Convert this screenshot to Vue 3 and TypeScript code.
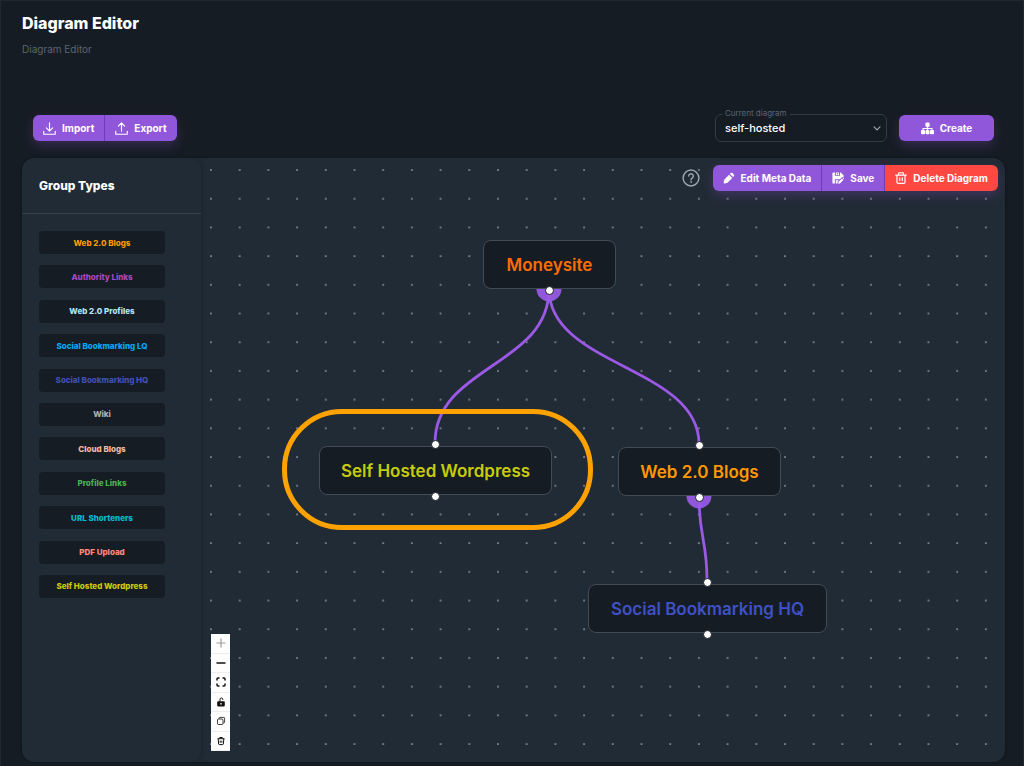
<script setup lang="ts">
import { ref } from 'vue'

interface GroupType {
  name: string
  color: string
}

interface DiagramNode {
  id: string
  label: string
  color: string
  x: number
  y: number
  width: number
  input: boolean
  expanded: boolean
}

interface Point {
  x: number
  y: number
}

const NODE_HEIGHT = 49
const GRID_SIZE = 20
const ZOOM = 1.435

const groupTypes: GroupType[] = [
  { name: 'Web 2.0 Blogs', color: '#ff9800' },
  { name: 'Authority Links', color: '#ab47bc' },
  { name: 'Web 2.0 Profiles', color: '#b3e5fc' },
  { name: 'Social Bookmarking LQ', color: '#03a9f4' },
  { name: 'Social Bookmarking HQ', color: '#3f51b5' },
  { name: 'Wiki', color: '#b0b0b0' },
  { name: 'Cloud Blogs', color: '#eebba5' },
  { name: 'Profile Links', color: '#4caf50' },
  { name: 'URL Shorteners', color: '#00bcd4' },
  { name: 'PDF Upload', color: '#ff8a80' },
  { name: 'Self Hosted Wordpress', color: '#cccc0a' },
]

const nodes: DiagramNode[] = [
  { id: 'money', label: 'Moneysite', color: '#ff6d00', x: 282, y: 82, width: 133, input: false, expanded: true },
  { id: 'wordpress', label: 'Self Hosted Wordpress', color: '#c6cc0a', x: 118, y: 288, width: 233, input: true, expanded: false },
  { id: 'blogs', label: 'Web 2.0 Blogs', color: '#ff9800', x: 417, y: 289, width: 163, input: true, expanded: true },
  { id: 'social', label: 'Social Bookmarking HQ', color: '#3f51c5', x: 387, y: 426, width: 239, input: true, expanded: false },
]

const links: [string, string][] = [
  ['money', 'wordpress'],
  ['money', 'blogs'],
  ['blogs', 'social'],
]

function find(id: string): DiagramNode {
  return nodes.find((n) => n.id === id)!
}

function centre(n: DiagramNode): number {
  return n.x + (n.width - 1) / 2
}

function outlet(n: DiagramNode): Point {
  return { x: centre(n), y: n.y + NODE_HEIGHT }
}

function inlet(n: DiagramNode): Point {
  return { x: centre(n), y: n.y - 3 }
}

function edgePath([from, to]: [string, string]): string {
  const a = outlet(find(from))
  const b = inlet(find(to))
  const mid = (a.y + b.y) / 2
  return `M${a.x},${a.y} C${a.x},${mid} ${b.x},${mid} ${b.x},${b.y}`
}

const current = ref('self-hosted')
</script>

<template>
  <main class="page">
    <header class="heading">
      <h1>Diagram Editor</h1>
      <p>Diagram Editor</p>
    </header>

    <div class="actions">
      <div class="button-group">
        <button type="button" class="btn">
          <svg class="icon" viewBox="0 0 14 14" fill="none" stroke="currentColor" stroke-width="1.2" stroke-linecap="round" stroke-linejoin="round">
            <path d="M7 .8V9.6M3.6 6.4 7 9.8l3.4-3.4M.8 10v3.2h12.400V10" />
          </svg>
          Import
        </button>
        <button type="button" class="btn">
          <svg class="icon" viewBox="0 0 14 14" fill="none" stroke="currentColor" stroke-width="1.2" stroke-linecap="round" stroke-linejoin="round">
            <path d="M7 10V1.2M3.6 4.400 7 1l3.4 3.4M.8 10v3.2h12.400V10" />
          </svg>
          Export
        </button>
      </div>
      <div class="actions-right">
        <div class="field">
          <label for="diagram">Current diagram</label>
          <select id="diagram" v-model="current">
            <option>self-hosted</option>
          </select>
          <svg class="chevron" viewBox="0 0 8 5" fill="none" stroke="currentColor" stroke-width="1.1" stroke-linecap="round" stroke-linejoin="round">
            <path d="M1 .8 4 3.8 7 .8" />
          </svg>
        </div>
        <button type="button" class="btn create">
          <svg class="icon" viewBox="0 0 14 14" fill="currentColor">
            <rect x="4.7" y=".6" width="4.6" height="4.8" rx="1.4" />
            <rect x="0" y="8.600" width="4.3" height="4.6" rx="1.1" />
            <rect x="4.850" y="8.600" width="4.3" height="4.6" rx="1.1" />
            <rect x="9.7" y="8.600" width="4.3" height="4.6" rx="1.1" />
            <path d="M7 5v4M2.200 9V7h9.600v2" fill="none" stroke="currentColor" stroke-width="1.2" />
          </svg>
          Create
        </button>
      </div>
    </div>

    <section class="editor">
      <aside class="sidebar">
        <h2>Group Types</h2>
        <ul>
          <li v-for="g in groupTypes" :key="g.name">
            <button type="button" class="group" :style="{ color: g.color }">{{ g.name }}</button>
          </li>
        </ul>
      </aside>

      <div class="canvas">
        <svg class="layer" aria-hidden="true">
          <defs>
            <pattern id="dots" x="9" y="11" :width="GRID_SIZE * ZOOM" :height="GRID_SIZE * ZOOM" patternUnits="userSpaceOnUse">
              <circle cx="1" cy="1" r="0.85" fill="#b4bbc2" />
            </pattern>
          </defs>
          <rect width="100%" height="100%" fill="url(#dots)" />
          <g v-for="n in nodes.filter((node) => node.expanded)" :key="n.id">
            <circle :cx="outlet(n).x" :cy="outlet(n).y" r="12.5" fill="#9157da" />
          </g>
          <path v-for="l in links" :key="l.join()" :d="edgePath(l)" fill="none" stroke="#9b59e6" stroke-width="2.8" />
        </svg>

        <div
          v-for="n in nodes"
          :key="n.id"
          class="node"
          :style="{ left: n.x + 'px', top: n.y + 'px', width: n.width + 'px', height: NODE_HEIGHT + 'px', color: n.color }"
        >
          {{ n.label }}
          <span v-if="n.input" class="handle top"></span>
          <span class="handle bottom"></span>
        </div>

        <div class="highlight"></div>

        <div class="toolbar">
          <button type="button" class="help" aria-label="Help">
            <svg viewBox="0 0 18 18" fill="none" stroke="currentColor" stroke-width="1.5" stroke-linecap="round">
              <circle cx="9" cy="9" r="7.9" />
              <path d="M6.7 7.1a2.3 2.3 0 1 1 3.5 2c-.8.5-1.2.8-1.2 1.7" />
              <circle cx="9" cy="13" r=".5" fill="currentColor" stroke-width=".8" />
            </svg>
          </button>
          <div class="button-group">
            <button type="button" class="btn">
              <svg class="icon" viewBox="0 0 14 14" fill="currentColor">
                <path d="M1.600 8.700 7.100 3.200l3.700 3.700-5.500 5.500-3.200.9a1 1 0 0 1-1.300-1.300zM8.100 2.200l.9-.9a1.500 1.500 0 0 1 2.100 0l1.600 1.600a1.500 1.500 0 0 1 0 2.100l-.9.9z" />
              </svg>
              Edit Meta Data
            </button>
            <button type="button" class="btn">
              <svg class="icon" viewBox="0 0 14 14">
                <path fill="currentColor" fill-rule="evenodd" d="M1.500.5h1.800v4h6v-4h.9L13.500 3.700v2.300c-1-.4-1.900 0-2.600.7L9.100 8.500H3.300v5H1.500a1 1 0 0 1-1-1v-11a1 1 0 0 1 1-1zM4.400.5h3.800v3H4.400zM5.700 1.300v1.500h1.100V1.300zM4.400 9.600h3.700l-1.600 1.600v2.300H4.400z" />
                <path fill="currentColor" d="m7.500 11.600 4-4 1.700 1.700-4 4-1.900.4zM12.200 6.900l.3-.3c.7-.5 2 .9 1.400 1.500l-.3.300z" />
              </svg>
              Save
            </button>
            <button type="button" class="btn danger">
              <svg class="icon" viewBox="0 0 14 14" fill="none" stroke="currentColor" stroke-width="1.400" stroke-linecap="round" stroke-linejoin="round">
                <path d="M.8 3.600h12.400M4.300 3.400V.9h5.400v2.500M2.300 3.800v8.200a1.200 1.200 0 0 0 1.200 1.200h7a1.200 1.200 0 0 0 1.200-1.200V3.800M5.500 6.900v3M8.500 6.900v3" />
              </svg>
              Delete Diagram
            </button>
          </div>
        </div>

        <div class="controls">
          <button type="button" aria-label="Zoom in" disabled>
            <svg viewBox="0 0 10 10" stroke="currentColor" stroke-width="1.200"><path d="M5 .5v9M.5 5h9" /></svg>
          </button>
          <button type="button" aria-label="Zoom out">
            <svg viewBox="0 0 10 10" stroke="currentColor" stroke-width="1.400"><path d="M.5 5h9" /></svg>
          </button>
          <button type="button" aria-label="Fit view">
            <svg viewBox="0 0 10 10" fill="none" stroke="currentColor" stroke-width="1.500"><path d="M1 3.500V2a1 1 0 0 1 1-1h1.500M6.500 1H8a1 1 0 0 1 1 1v1.500M9 6.500V8a1 1 0 0 1-1 1H6.500M3.500 9H2a1 1 0 0 1-1-1V6.500" /></svg>
          </button>
          <button type="button" aria-label="Toggle lock">
            <svg viewBox="0 0 10 10"><path d="M4 4.500V2.400a1.400 1.400 0 0 1 2.800 0V3" fill="none" stroke="currentColor" /><path fill="currentColor" fill-rule="evenodd" d="M2 4.200h6a.8.8 0 0 1 .8.8v3.600a.8.8 0 0 1-.8.8H2a.8.8 0 0 1-.8-.8V5a.8.8 0 0 1 .8-.8zM5 6.100a.7.7 0 1 0 .01 0z" /></svg>
          </button>
          <button type="button" aria-label="Copy">
            <svg viewBox="0 0 10 10" fill="none" stroke="currentColor" stroke-width=".8"><rect x="1.500" y="3" width="5.500" height="5.500" rx="1" /><path d="M3.200 2.800V2.200a.8.8 0 0 1 .8-.8h3.800a.8.8 0 0 1 .8.8V6a.8.8 0 0 1-.8.8h-.5" /></svg>
          </button>
          <button type="button" aria-label="Delete">
            <svg viewBox="0 0 10 10" fill="none" stroke="currentColor" stroke-width="1"><path d="M1.500 2.700h7M3.700 2.500V1.500h2.600v1M2.200 3l.5 5.100a.6.6 0 0 0 .6.5h3.400a.6.6 0 0 0 .6-.5L7.800 3M4.200 4.700v2M5.800 4.700v2" /></svg>
          </button>
        </div>
      </div>
    </section>
  </main>
</template>

<style>
body {
  margin: 0;
  background: #161c24;
}
</style>

<style scoped>
* {
  box-sizing: border-box;
}

.page {
  display: flex;
  flex-direction: column;
  min-height: 100vh;
  padding: 12px 18px 4px 21px;
  border: 1px solid #20272f;
  border-bottom: 0;
  background: #161c24;
  color: #fff;
  font-family: Inter, "Liberation Sans", sans-serif;
  font-size: 10px;
}

button {
  margin: 0;
  border: 0;
  font: inherit;
  cursor: pointer;
}

.heading h1 {
  margin: 0;
  font-size: 16px;
  font-weight: 800;
  line-height: 20px;
}

.heading p {
  margin: 9px 0 0;
  color: #5a6673;
  font-size: 10px;
  line-height: 14px;
}

.actions {
  display: flex;
  align-items: center;
  justify-content: space-between;
  margin-top: 58px;
  padding: 0 11px;
}

.actions-right {
  display: flex;
  align-items: center;
  gap: 12px;
}

.button-group {
  display: flex;
  border-radius: 6px;
  box-shadow: 0 5px 11px rgba(145, 87, 218, 0.24);
}

.btn {
  display: flex;
  align-items: center;
  justify-content: center;
  gap: 6px;
  height: 26px;
  padding: 0 10px;
  background: #9157da;
  color: #fff;
  font-weight: 700;
  white-space: nowrap;
}

.button-group .btn:first-child {
  border-radius: 6px 0 0 6px;
}

.button-group .btn:last-child {
  border-radius: 0 6px 6px 0;
}

.button-group .btn:not(:last-child) {
  border-right: 1px solid #6f3bb8;
}

.icon {
  width: 12px;
  height: 12px;
}

.actions .icon {
  width: 13px;
  height: 13px;
}

.btn.danger {
  background: #ff4842;
}

.create {
  width: 95px;
  border-radius: 6px;
  box-shadow: 0 5px 11px rgba(145, 87, 218, 0.24);
}

.field {
  position: relative;
}

.field label {
  position: absolute;
  top: -7px;
  left: 7px;
  padding: 0 3px;
  background: #161c24;
  color: #5a6673;
  font-size: 8px;
  line-height: 12px;
}

.field select {
  display: block;
  width: 172px;
  height: 28px;
  padding: 0 9px;
  border: 1px solid #343c46;
  border-radius: 6px;
  appearance: none;
  background: transparent;
  color: #fff;
  font: inherit;
  font-size: 11px;
  font-weight: 500;
}

.chevron {
  position: absolute;
  top: 12px;
  right: 6px;
  width: 8px;
  height: 5px;
  color: #a3abb3;
  pointer-events: none;
}

.editor {
  display: flex;
  flex: 1;
  margin-top: 16px;
  border-radius: 12px;
  overflow: hidden;
  background: #212b35;
  box-shadow: 0 0 3px rgba(0, 0, 0, 0.4);
}

.sidebar {
  flex: none;
  width: 179px;
  border-radius: 12px;
  box-shadow: 0 0 5px rgba(0, 0, 0, 0.25);
}

.sidebar h2 {
  margin: 0;
  padding: 18px 17px;
  border-bottom: 1px solid #37414c;
  font-size: 12px;
  font-weight: 800;
  line-height: 19px;
}

.sidebar ul {
  display: grid;
  align-content: space-between;
  min-height: 401px;
  margin: 0;
  padding: 17px 36px 17px 17px;
  list-style: none;
}

.group {
  display: block;
  width: 100%;
  height: 23px;
  padding: 0;
  border-radius: 4px;
  background: #161c24;
  font-size: 8px;
  font-weight: 800;
}

.canvas {
  position: relative;
  flex: 1;
}

.layer {
  position: absolute;
  inset: 0;
  width: 100%;
  height: 100%;
}

.node {
  position: absolute;
  display: flex;
  align-items: center;
  justify-content: center;
  border: 1px solid #434c56;
  border-radius: 8px;
  background: #161c24;
  font-size: 17px;
  font-weight: 600;
  white-space: nowrap;
}

.handle {
  position: absolute;
  left: 50%;
  width: 9px;
  height: 9px;
  margin-left: -5px;
  border: 1px solid #161c24;
  border-radius: 50%;
  background: #fff;
}

.handle.top {
  top: -7px;
}

.handle.bottom {
  bottom: -7px;
}

.highlight {
  position: absolute;
  top: 251px;
  left: 81px;
  width: 311px;
  height: 121px;
  border: 5px solid #ffa200;
  border-radius: 60px;
  pointer-events: none;
}

.toolbar {
  position: absolute;
  top: 7px;
  right: 7px;
  display: flex;
  align-items: center;
  gap: 13px;
}

.help {
  width: 18px;
  height: 18px;
  padding: 0;
  background: none;
  color: #9aa5b1;
}

.help svg {
  display: block;
  width: 18px;
  height: 18px;
}

.controls {
  position: absolute;
  bottom: 11px;
  left: 10px;
  display: grid;
  width: 19px;
  height: 117px;
  background: #fefefe;
}

.controls button {
  display: grid;
  place-items: center;
  padding: 0;
  border-bottom: 1px solid #eee;
  background: none;
  color: #111;
}

.controls button:disabled {
  color: #999;
}

.controls svg {
  width: 10px;
  height: 10px;
}
</style>
